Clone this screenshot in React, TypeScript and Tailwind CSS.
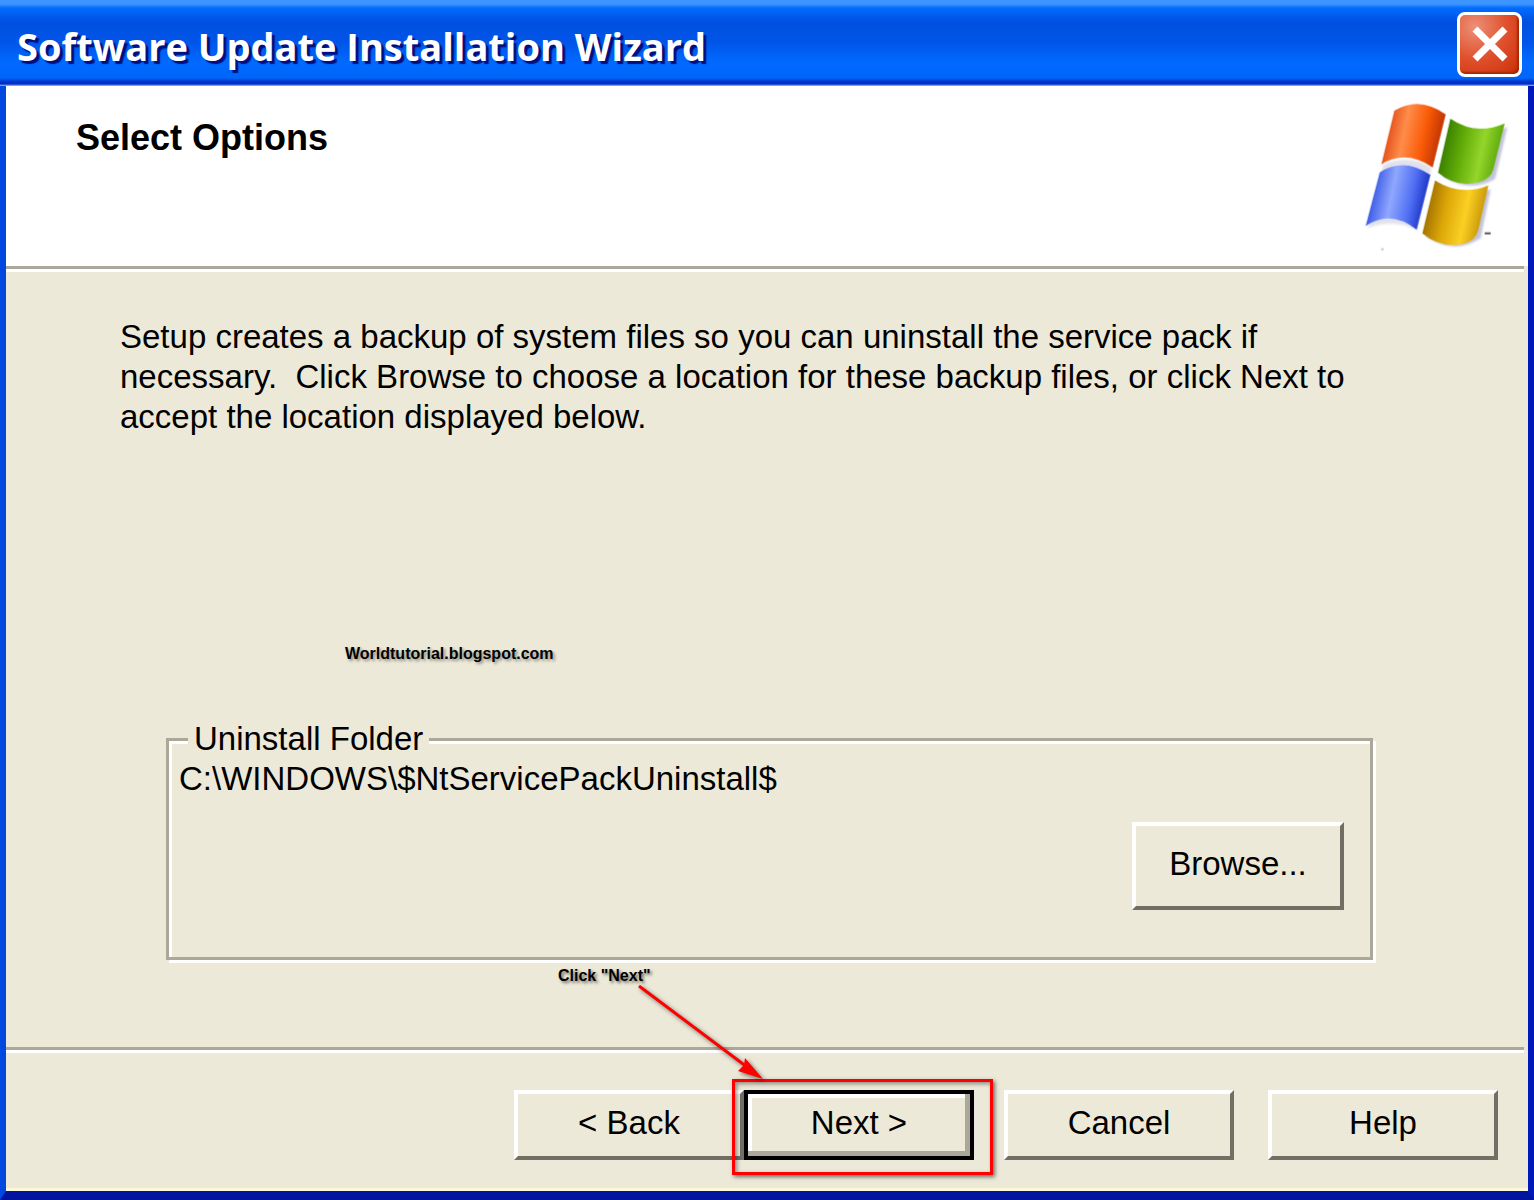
import clsx from 'clsx';
import type { ReactNode } from 'react';

interface WizardButtonProps {
  children: ReactNode;
  className?: string;
  isDefault?: boolean;
}

function WizardButton({ children, className, isDefault = false }: WizardButtonProps) {
  return (
    <button
      type="button"
      className={clsx(
        'flex items-center justify-center bg-[#ece9d8] pb-1 leading-10',
        isDefault
          ? 'border-4 border-black shadow-[inset_-5px_-5px_0_#aca899,inset_4px_4px_0_#fff]'
          : 'border-4 border-t-white border-l-white border-r-[#716f64] border-b-[#716f64]',
        className
      )}
    >
      {children}
    </button>
  );
}

function Divider() {
  return <div className="mr-1 h-[6px] shrink-0 border-t-[3px] border-b-[3px] border-t-[#aca899] border-b-white" />;
}

function WindowsFlag() {
  return (
    <svg viewBox="90 300 450 456" className="h-[152px] w-[150px]" aria-hidden="true">
      <defs>
        <linearGradient id="flag-red" x1="0" y1="0.4" x2="1" y2="0.6">
          <stop offset="0" stopColor="#d83a08" />
          <stop offset="0.35" stopColor="#ff8d4a" />
          <stop offset="0.65" stopColor="#fb5c08" />
          <stop offset="1" stopColor="#b02a00" />
        </linearGradient>
        <linearGradient id="flag-green" x1="0" y1="0.4" x2="1" y2="0.6">
          <stop offset="0" stopColor="#2f7400" />
          <stop offset="0.35" stopColor="#62ac08" />
          <stop offset="0.65" stopColor="#94d62c" />
          <stop offset="1" stopColor="#4a9a00" />
        </linearGradient>
        <linearGradient id="flag-blue" x1="0" y1="0.4" x2="1" y2="0.6">
          <stop offset="0" stopColor="#2040dc" />
          <stop offset="0.4" stopColor="#90a8ff" />
          <stop offset="0.7" stopColor="#5070f4" />
          <stop offset="1" stopColor="#0c20b8" />
        </linearGradient>
        <linearGradient id="flag-yellow" x1="0" y1="0.4" x2="1" y2="0.6">
          <stop offset="0" stopColor="#946400" />
          <stop offset="0.35" stopColor="#dca808" />
          <stop offset="0.65" stopColor="#fcd024" />
          <stop offset="1" stopColor="#b88600" />
        </linearGradient>
        <filter id="flag-blur">
          <feGaussianBlur stdDeviation="3" />
        </filter>
      </defs>
      <g fill="#c3c3da" filter="url(#flag-blur)">
        <path d="M360 370 Q435 408 520 382 L483 537 Q405 580 325 528 Z" />
        <path d="M314 554 Q385 590 470 568 L440 714 Q362 766 276 710 Z" />
        <path d="M148 494 Q225 460 292 502 L290 520 L250 690 Q175 655 102 684 Z" opacity="0.5" />
      </g>
      <path d="M181 332 Q256 286 335 343 L296 502 Q215 448 142 493 Z" fill="url(#flag-red)" />
      <path d="M349 356 Q426 408 512 370 L478 508 Q470 535 440 545 Q370 566 312 518 Z" fill="url(#flag-green)" />
      <path d="M137 517 Q210 470 289 525 L248 689 Q170 628 95 678 Z" fill="url(#flag-blue)" />
      <path d="M303 541 Q380 590 463 556 L433 690 Q425 720 395 730 Q325 748 265 700 Z" fill="url(#flag-yellow)" />
      <path d="M452 700h18" stroke="#555" strokeWidth="6" />
      <circle cx="145" cy="748" r="4" fill="#ccc" />
    </svg>
  );
}

function TitleBar() {
  return (
    <header className="flex h-[86px] shrink-0 items-center justify-between bg-[linear-gradient(to_bottom,#3d95ff_0px,#3d95ff_4px,#006cff_8px,#0050e0_22px,#0055e8_42px,#0069ff_62px,#0066fa_78px,#0030c8_82px,#0030c8_84px,#a8c0f0_86px)] pr-3 pl-[17px]">
      <h1 className="pt-[6px] font-['Open_Sans'] text-[38px] leading-[50px] font-bold text-white [text-shadow:3px_3px_1px_#001080]">
        Software Update Installation Wizard
      </h1>
      <button
        type="button"
        aria-label="Close"
        className="mt-[2px] flex h-[65px] w-[65px] items-center justify-center rounded-lg border-[3px] border-white bg-[radial-gradient(circle_at_25%_20%,#ec9078,#e0502c_50%,#c83008)] shadow-[inset_-2px_-2px_2px_#a82800]"
      >
        <svg viewBox="0 0 36 36" className="h-9 w-9" aria-hidden="true">
          <path d="M3 3L33 33M33 3L3 33" stroke="#fff" strokeWidth="7" />
        </svg>
      </button>
    </header>
  );
}

// callout drawn over the default button
function NextCallout() {
  return (
    <>
      <span className="pointer-events-none absolute -top-[11px] -left-3 h-24 w-[261px] border-[3px] border-[#f00] shadow-[2px_2px_4px_#0008,inset_2px_2px_4px_#0006]" />
      <span className="absolute -top-[124px] -left-[186px] font-['Liberation_Sans'] text-base leading-5 font-bold whitespace-nowrap [text-shadow:2px_2px_3px_#0008]">
        Click "Next"
      </span>
      <svg
        viewBox="0 0 130 100"
        className="pointer-events-none absolute -top-[106px] -left-[107px] h-[100px] w-[130px] overflow-visible drop-shadow-[2px_2px_2px_#0008]"
        aria-hidden="true"
      >
        <path d="M2 2L110 83" stroke="#f00" strokeWidth="3" />
        <path d="M126 95L108 74L107 81L101 87Z" fill="#f00" />
      </svg>
    </>
  );
}

export default function App() {
  return (
    <div className="flex min-h-screen flex-col bg-[#ece9d8] font-['Liberation_Sans',sans-serif] text-[33px] text-black">
      <TitleBar />
      <main className="flex flex-1 flex-col border-r-[6px] border-b-[9px] border-l-[6px] border-r-[#0018b8] border-b-[#0014a0] border-l-[#0048e0]">
        <section className="flex h-[180px] items-start justify-between bg-white pt-[14px] pr-[14px] pl-[70px]">
          <h2 className="pt-[18px] text-[36px] leading-10 font-bold">Select Options</h2>
          <WindowsFlag />
        </section>
        <Divider />
        <section className="flex flex-1 flex-col pt-[45px]">
          <p className="pl-[114px] leading-10">
            Setup creates a backup of system files so you can uninstall the service pack if
            <br />
            necessary.&nbsp; Click Browse to choose a location for these backup files, or click Next to
            <br />
            accept the location displayed below.
          </p>
          <p className="mt-[207px] pl-[339px] text-base leading-5 font-bold [text-shadow:2px_2px_3px_#0006]">
            Worldtutorial.blogspot.com
          </p>
          <fieldset className="mt-[55px] mr-[155px] mb-[87px] ml-[160px] border-[3px] border-[#aca899] pr-[26px] pb-[47px] pl-[10px] shadow-[3px_3px_0_#fff,inset_3px_3px_0_#fff]">
            <legend className="ml-[9px] bg-[#ece9d8] px-[6px] leading-10">Uninstall Folder</legend>
            <p className="leading-10">C:\WINDOWS\$NtServicePackUninstall$</p>
            <WizardButton className="mt-[23px] ml-auto h-[88px] w-[212px]">Browse...</WizardButton>
          </fieldset>
        </section>
        <Divider />
        <footer className="flex justify-end border-b-[3px] border-[#fcf8d8] pt-[37px] pr-[30px] pb-[28px]">
          <WizardButton className="h-[70px] w-[230px]">&lt; Back</WizardButton>
          <div className="relative mr-[30px]">
            <WizardButton className="h-[70px] w-[230px]" isDefault>
              Next &gt;
            </WizardButton>
            <NextCallout />
          </div>
          <WizardButton className="mr-[34px] h-[70px] w-[230px]">Cancel</WizardButton>
          <WizardButton className="h-[70px] w-[230px]">Help</WizardButton>
        </footer>
      </main>
    </div>
  );
}
